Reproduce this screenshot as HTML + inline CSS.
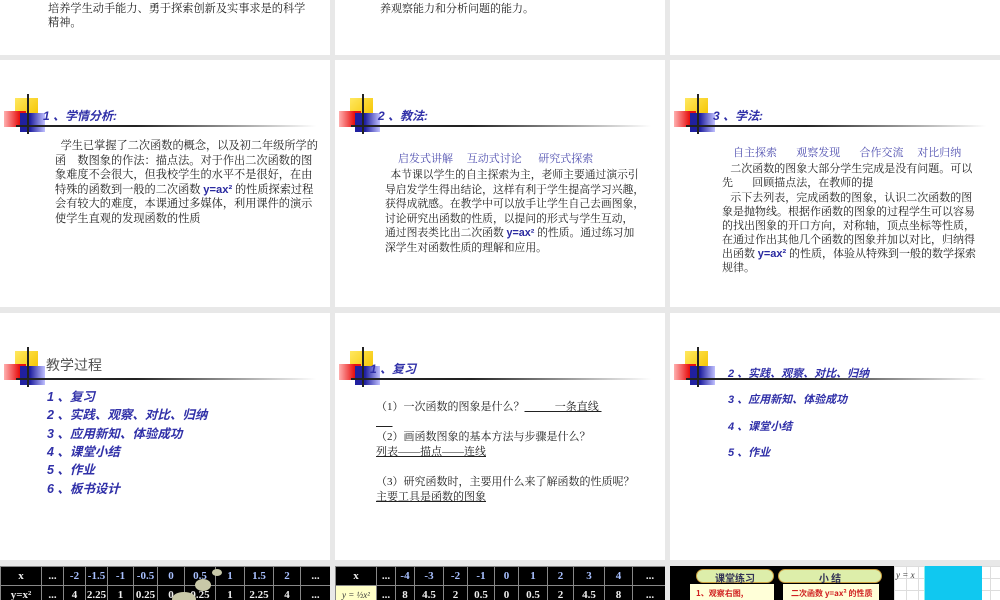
<!DOCTYPE html>
<html><head><meta charset="utf-8"><style>
*{margin:0;padding:0;box-sizing:border-box}
body{width:1000px;height:600px;background:#e8e8e8;position:relative;overflow:hidden;font-family:"Liberation Serif","Noto Serif CJK SC","Noto Sans CJK SC",serif;color:#222}
.p{position:absolute;background:#fff;overflow:hidden}
.logo{position:absolute;left:0;top:0;width:330px;height:80px}
.y{position:absolute;left:15px;top:38px;width:23px;height:18px;background:linear-gradient(135deg,#ffe860,#f5c400)}
.r{position:absolute;left:4px;top:51px;width:22px;height:16px;background:linear-gradient(90deg,#ffb0b0,#e81010 70%)}
.b{position:absolute;left:20px;top:53px;width:25px;height:19px;background:linear-gradient(90deg,#2020a0 40%,#c0c0ff)}
.v{position:absolute;left:27px;top:34px;width:1.5px;height:40px;background:#222}
.h{position:absolute;left:16px;top:65px;width:300px;height:1.5px;background:linear-gradient(90deg,#222 40%,#fff)}
.t{position:absolute;left:43px;top:47px;font:italic bold 12px "Liberation Sans","Noto Sans CJK SC",sans-serif;color:#3030a8}
.txt{position:absolute;font-size:11.5px;line-height:14.5px;white-space:nowrap}
.bl{color:#2a2aa0;font-weight:bold;font-family:"Liberation Sans",sans-serif}
.m{color:#5050b0}
.li{font:italic bold 12.5px "Liberation Sans","Noto Sans CJK SC",sans-serif;color:#3030a8;position:absolute;white-space:nowrap}
table{position:absolute;border-collapse:collapse;background:#000;table-layout:fixed}
td{border:1.5px solid #888;color:#a8c0ff;font:bold 11px "Liberation Serif",serif;text-align:center;height:19px;padding:0}
td.w{color:#eee}
u{text-decoration:underline}
</style></head><body>

<div class="p" style="left:0;top:0;width:330px;height:55px">
<div class="txt" style="left:48px;top:-13px;font-size:11.2px">学生自主探索，合作交流，体验成功的乐趣。<br>培养学生动手能力、勇于探索创新及实事求是的科学<br>精神。</div></div>
<div class="p" style="left:335px;top:0;width:330px;height:55px">
<div class="txt" style="left:45px;top:-13px;font-size:11px">培养学生的合作意识和能力。<br>养观察能力和分析问题的能力。</div></div>
<div class="p" style="left:670px;top:0;width:330px;height:55px"></div>

<div class="p" style="left:0;top:60px;width:330px;height:247px">
<div class="logo"><div class="y"></div><div class="r"></div><div class="b"></div><div class="v"></div><div class="h"></div><div class="t">1 、学情分析:</div></div>
<div class="txt" style="left:55px;top:79px;font-size:11.2px">&nbsp;&nbsp;学生已掌握了二次函数的概念，以及初二年级所学的<br>函　数图象的作法：描点法。对于作出二次函数的图<br>象难度不会很大，但我校学生的水平不是很好，在由<br>特殊的函数到一般的二次函数 <span class="bl">y=ax²</span> 的性质探索过程<br>会有较大的难度，本课通过多媒体，利用课件的演示<br>使学生直观的发现函数的性质</div></div>

<div class="p" style="left:335px;top:60px;width:330px;height:247px">
<div class="logo"><div class="y"></div><div class="r"></div><div class="b"></div><div class="v"></div><div class="h"></div><div class="t">2 、教法:</div></div>
<div class="txt m" style="left:63px;top:92px;font-size:11px">启发式讲解&nbsp;&nbsp;&nbsp;&nbsp;&nbsp;互动式讨论&nbsp;&nbsp;&nbsp;&nbsp;&nbsp;&nbsp;研究式探索</div>
<div class="txt" style="left:50px;top:108px;font-size:10.8px">&nbsp;&nbsp;本节课以学生的自主探索为主，老师主要通过演示引<br>导启发学生得出结论，这样有利于学生提高学习兴趣，<br>获得成就感。在教学中可以放手让学生自己去画图象，<br>讨论研究出函数的性质，以提问的形式与学生互动，<br>通过图表类比出二次函数 <span class="bl">y=ax²</span> 的性质。通过练习加<br>深学生对函数性质的理解和应用。</div></div>

<div class="p" style="left:670px;top:60px;width:330px;height:247px">
<div class="logo"><div class="y"></div><div class="r"></div><div class="b"></div><div class="v"></div><div class="h"></div><div class="t">3 、学法:</div></div>
<div class="txt m" style="left:63px;top:86px;font-size:11px">自主探索&nbsp;&nbsp;&nbsp;&nbsp;&nbsp;&nbsp;&nbsp;观察发现&nbsp;&nbsp;&nbsp;&nbsp;&nbsp;&nbsp;&nbsp;合作交流&nbsp;&nbsp;&nbsp;&nbsp;&nbsp;对比归纳</div>
<div class="txt" style="left:52px;top:102px;font-size:11px;line-height:14px">&nbsp;&nbsp;&nbsp;二次函数的图象大部分学生完成是没有问题。可以<br>先&nbsp;&nbsp;&nbsp;&nbsp;&nbsp;&nbsp;&nbsp;回顾描点法，在教师的提</div>
<div class="txt" style="left:52px;top:131px;font-size:11px;line-height:14px">&nbsp;&nbsp;&nbsp;示下去列表，完成函数的图象，认识二次函数的图<br>象是抛物线。根据作函数的图象的过程学生可以容易<br>的找出图象的开口方向，对称轴，顶点坐标等性质，<br>在通过作出其他几个函数的图象并加以对比，归纳得<br>出函数 <span class="bl">y=ax²</span> 的性质，体验从特殊到一般的数学探索<br>规律。</div></div>

<div class="p" style="left:0;top:313px;width:330px;height:247px">
<div class="logo"><div class="y"></div><div class="r"></div><div class="b"></div><div class="v"></div><div class="h"></div>
<div style="position:absolute;left:46px;top:42px;font-size:14px;color:#555;font-family:'Liberation Sans','Noto Sans CJK SC',sans-serif">教学过程</div></div>
<div class="li" style="left:47px;top:73px">1 、复习</div>
<div class="li" style="left:47px;top:91px">2 、实践、观察、对比、归纳</div>
<div class="li" style="left:47px;top:110px">3 、应用新知、体验成功</div>
<div class="li" style="left:47px;top:128px">4 、课堂小结</div>
<div class="li" style="left:47px;top:146px">5 、作业</div>
<div class="li" style="left:47px;top:165px">6 、板书设计</div></div>

<div class="p" style="left:335px;top:313px;width:330px;height:247px">
<div class="logo"><div class="y"></div><div class="r"></div><div class="b"></div><div class="v"></div><div class="h"></div><div class="t" style="left:35px">1 、复习</div></div>
<div class="txt" style="left:41px;top:87px;line-height:15px;font-size:11px">（1）一次函数的图象是什么？<u>&nbsp;&nbsp;&nbsp;&nbsp;&nbsp;&nbsp;&nbsp;&nbsp;&nbsp;&nbsp;&nbsp;一条直线&nbsp;</u><br><u>&nbsp;&nbsp;&nbsp;&nbsp;&nbsp;&nbsp;</u><br>（2）画函数图象的基本方法与步骤是什么？<br><u>列表——描点——连线</u><br><br>（3）研究函数时，主要用什么来了解函数的性质呢？<br><u>主要工具是函数的图象</u></div></div>

<div class="p" style="left:670px;top:313px;width:330px;height:247px">
<div class="logo"><div class="y"></div><div class="r"></div><div class="b"></div><div class="v"></div><div class="h"></div></div>
<div class="li" style="left:58px;top:52px;font-size:11px">2 、实践、观察、对比、归纳</div>
<div class="li" style="left:58px;top:78px;font-size:11px">3 、应用新知、体验成功</div>
<div class="li" style="left:58px;top:105px;font-size:11px">4 、课堂小结</div>
<div class="li" style="left:58px;top:131px;font-size:11px">5 、作业</div></div>

<div class="p" style="left:0;top:566px;width:330px;height:34px;background:#000">
<table style="left:0;top:0;width:330px">
<colgroup><col style="width:41px"><col style="width:22px"><col style="width:22px"><col style="width:22px"><col style="width:26px"><col style="width:24px"><col style="width:27px"><col style="width:31px"><col style="width:29px"><col style="width:29px"><col style="width:27px"><col style="width:30px"></colgroup>
<tr><td class="w">x</td><td class="w">...</td><td>-2</td><td>-1.5</td><td>-1</td><td>-0.5</td><td>0</td><td>0.5</td><td>1</td><td>1.5</td><td>2</td><td class="w">...</td></tr>
<tr><td class="w">y=x²</td><td class="w">...</td><td class="w">4</td><td class="w">2.25</td><td class="w">1</td><td class="w">0.25</td><td class="w">0</td><td class="w">0.25</td><td class="w">1</td><td class="w">2.25</td><td class="w">4</td><td class="w">...</td></tr></table>
<div style="position:absolute;left:212px;top:3px;width:10px;height:7px;border-radius:50%;background:#c8c8a8"></div>
<div style="position:absolute;left:195px;top:13px;width:16px;height:12px;border-radius:50%;background:#c8c8a8"></div>
<div style="position:absolute;left:172px;top:26px;width:24px;height:14px;border-radius:50%;background:#c8c8a8"></div>
</div>

<div class="p" style="left:335px;top:566px;width:330px;height:34px;background:#fff">
<table style="left:0;top:0;width:332px">
<colgroup><col style="width:41px"><col style="width:19px"><col style="width:19px"><col style="width:29px"><col style="width:24px"><col style="width:27px"><col style="width:24px"><col style="width:29px"><col style="width:26px"><col style="width:31px"><col style="width:28px"><col style="width:35px"></colgroup>
<tr><td class="w">x</td><td class="w">...</td><td>-4</td><td>-3</td><td>-2</td><td>-1</td><td>0</td><td>1</td><td>2</td><td>3</td><td>4</td><td class="w">...</td></tr>
<tr><td style="background:#ffffc8;color:#333;font:italic 9px serif">y = ½x²</td><td class="w">...</td><td class="w">8</td><td class="w">4.5</td><td class="w">2</td><td class="w">0.5</td><td class="w">0</td><td class="w">0.5</td><td class="w">2</td><td class="w">4.5</td><td class="w">8</td><td class="w">...</td></tr></table></div>

<div class="p" style="left:670px;top:566px;width:330px;height:34px;background:#000">
<div style="position:absolute;left:26px;top:3px;width:78px;height:14px;border-radius:7px;background:#ddeeaa;border:1px solid #cca040;font:bold 10px 'Noto Sans CJK SC',sans-serif;text-align:center;color:#335">课堂练习</div>
<div style="position:absolute;left:108px;top:3px;width:104px;height:14px;border-radius:7px;background:#ddeeaa;border:1px solid #cca040;font:bold 10px 'Noto Sans CJK SC',sans-serif;text-align:center;color:#335">小 结</div>
<div style="position:absolute;left:20px;top:18px;width:84px;height:20px;background:#ffffd8;font:bold 8px 'Noto Sans CJK SC',sans-serif;color:#d02020;padding:4px 0 0 6px">1、观察右图,</div>
<div style="position:absolute;left:113px;top:18px;width:96px;height:20px;background:#ffffd8;font:bold 8px 'Noto Sans CJK SC',sans-serif;color:#d02020;padding:4px 0 0 8px">二次函数 y=ax² 的性质</div>
<div style="position:absolute;left:224px;top:0;width:106px;height:34px;background:#fff;background-image:linear-gradient(#ddd 1px,transparent 1px),linear-gradient(90deg,#ddd 1px,transparent 1px);background-size:12px 12px"></div>
<div style="position:absolute;left:226px;top:4px;font:italic 9px serif;color:#333">y = x</div>
<div style="position:absolute;left:254px;top:0;width:58px;height:34px;background:#10c8f0;border-left:1px solid #8ee"></div>
</div>
</body></html>
